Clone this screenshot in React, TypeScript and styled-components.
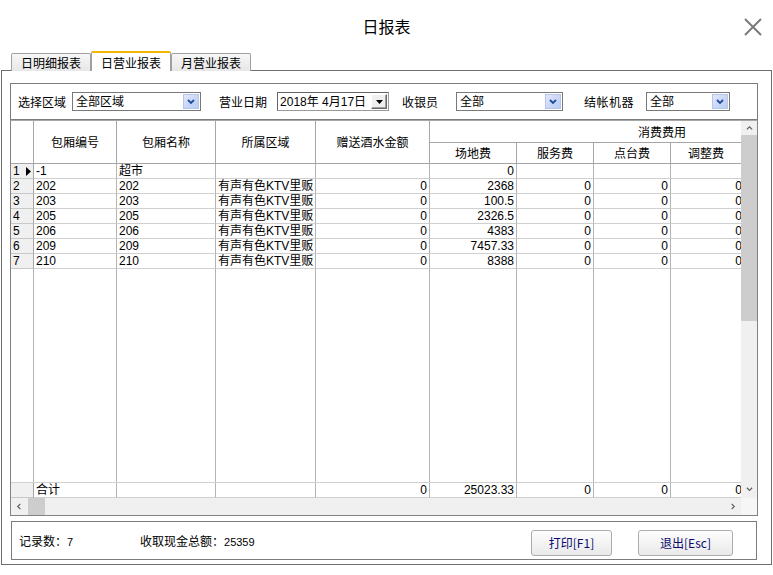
import React from "react";
import styled, { createGlobalStyle } from "styled-components";

const GlobalStyle = createGlobalStyle`
  html, body {
    margin: 0;
    padding: 0;
    background: #fff;
  }
  body {
    font-family: "Noto Sans CJK SC", "Noto Sans", sans-serif;
    font-size: 12px;
    color: #000;
  }
  * {
    box-sizing: border-box;
  }
`;

const COLS = "23px 83px 99px 100px 114px 87px 77px 77px 74px";
const DATA_FONT = `"Liberation Sans", "Noto Sans CJK SC", sans-serif`;

const Window = styled.div`
  width: 773px;
  height: 575px;
  background: #fff;
  display: flex;
  flex-direction: column;
  overflow: hidden;
`;

const TitleBar = styled.div`
  height: 51px;
  display: grid;
  grid-template-columns: 1fr auto 1fr;
  align-items: center;
`;

const Title = styled.h1`
  grid-column: 2;
  margin: 0;
  font-size: 16px;
  font-weight: 400;
  line-height: 20px;
  padding-top: 1px;
`;

const CloseButton = styled.div`
  grid-column: 3;
  justify-self: end;
  width: 20px;
  height: 20px;
  margin-right: 10px;
  margin-top: 3px;
  display: flex;
`;

const TabStrip = styled.div`
  height: 20px;
  display: flex;
  align-items: flex-end;
  padding-left: 11px;
  margin-bottom: -1px;
  position: relative;
  z-index: 1;
`;

const Tab = styled.div<{ $active?: boolean }>`
  width: 80px;
  height: ${({ $active }) => ($active ? "20px" : "18px")};
  display: flex;
  align-items: center;
  justify-content: center;
  font-size: 12px;
  line-height: 14px;
  border: 1px solid #a0a0a0;
  border-bottom: none;
  border-radius: 2px 2px 0 0;
  border-top: ${({ $active }) => ($active ? "2px solid #f2b600" : "1px solid #a0a0a0")};
  background: ${({ $active }) =>
    $active ? "#fff" : "linear-gradient(#f7f7f7, #e7e7e7)"};
  padding-top: ${({ $active }) => ($active ? "1px" : "0")};
`;

const Panel = styled.div`
  margin: 0 1px;
  height: 495px;
  border: 1px solid #6e6e6e;
  padding: 12px 0 0 8px;
  display: flex;
  flex-direction: column;
`;

const FilterBox = styled.div`
  width: 748px;
  height: 37px;
  border: 1px solid #7c7c7c;
  display: flex;
  align-items: center;
  padding-left: 7px;
`;

const Label = styled.span<{ $ml?: number; $mr: number; $spacing?: number }>`
  margin-left: ${({ $ml }) => $ml ?? 0}px;
  margin-right: ${({ $mr }) => $mr}px;
  letter-spacing: ${({ $spacing }) => $spacing ?? 0}px;
  font-size: 12px;
  white-space: nowrap;
`;

const Select = styled.div<{ $w: number }>`
  width: ${({ $w }) => $w}px;
  height: 19px;
  border: 1px solid #787878;
  background: #fff;
  display: flex;
  align-items: center;
  padding: 0 1px 0 3px;
  font-size: 12px;
`;

const SelectValue = styled.span`
  flex: 1;
  line-height: 14px;
  font-family: ${DATA_FONT};
`;

const BlueDrop = styled.div`
  width: 16px;
  height: 15px;
  border: 1px solid #b4c6ec;
  background: linear-gradient(135deg, #e6e8fb 0%, #c9d6f6 55%, #b8d0f2 100%);
  display: flex;
  align-items: center;
  justify-content: center;
`;

const DateBox = styled.div`
  width: 112px;
  height: 19px;
  border: 1px solid;
  border-color: #646464 #9a9a9a #9a9a9a #646464;
  background: #fff;
  display: flex;
  align-items: center;
  padding: 0 1px 0 2px;
  font-size: 12px;
`;

const GrayDrop = styled.div`
  width: 16px;
  height: 15px;
  background: #f0f0f0;
  border: 1px solid;
  border-color: #fff #6a6a6a #6a6a6a #fff;
  box-shadow: inset -1px -1px 0 #a0a0a0;
  display: flex;
  align-items: center;
  justify-content: center;
`;

const GridFrame = styled.div`
  width: 748px;
  height: 396px;
  border: 1px solid #828282;
  border-top-color: #a8a8a8;
  display: grid;
  grid-template-columns: 730px 16px;
  grid-template-rows: 377px 17px;
`;

const Viewport = styled.div`
  overflow: hidden;
  display: flex;
  flex-direction: column;
`;

const HeaderGrid = styled.div`
  display: grid;
  grid-template-columns: ${COLS};
  grid-template-rows: 22px 21px;
  width: 734px;
  flex: none;
`;

const HeadCell = styled.div<{ $col: string; $row: string; $align?: string; $pr?: number; $pl?: number }>`
  grid-column: ${({ $col }) => $col};
  grid-row: ${({ $row }) => $row};
  border-right: 1px solid #a6a6a6;
  border-bottom: 1px solid #a6a6a6;
  background: #fff;
  display: flex;
  align-items: center;
  justify-content: ${({ $align }) => $align ?? "center"};
  padding-right: ${({ $pr }) => $pr ?? 0}px;
  padding-left: ${({ $pl }) => $pl ?? 0}px;
  font-size: 12px;
  line-height: 14px;
  white-space: nowrap;
`;

const Row = styled.div<{ $total?: boolean }>`
  display: grid;
  grid-template-columns: ${COLS};
  height: ${({ $total }) => ($total ? "16px" : "15px")};
  width: 734px;
  flex: none;
  border-top: ${({ $total }) => ($total ? "1px solid #d0d0d0" : "none")};
`;

const Cell = styled.div<{ $right?: boolean }>`
  border-right: 1px solid #b4b4b4;
  border-bottom: 1px solid #d0d0d0;
  padding: 0 2px;
  font-family: ${DATA_FONT};
  font-size: 12px;
  line-height: 14px;
  white-space: nowrap;
  text-align: ${({ $right }) => ($right ? "right" : "left")};
`;

const NumCell = styled.div`
  border-right: 1px solid #a6a6a6;
  border-bottom: 1px solid #c8c8c8;
  background: #f0f0f0;
  padding-left: 2px;
  font-family: ${DATA_FONT};
  font-size: 12px;
  line-height: 14px;
  display: flex;
  align-items: center;
  gap: 6px;
`;

const Filler = styled.div`
  flex: 1;
  display: grid;
  grid-template-columns: ${COLS};
  width: 734px;
`;

const FillerCell = styled.div`
  border-right: 1px solid #b4b4b4;
`;

const VScroll = styled.div`
  grid-row: 1;
  grid-column: 2;
  background: #f0f0f0;
  display: flex;
  flex-direction: column;
`;

const ArrowBox = styled.div<{ $h: number; $w?: number }>`
  height: ${({ $h }) => $h}px;
  width: ${({ $w }) => ($w ? `${$w}px` : "auto")};
  flex: none;
  display: flex;
  align-items: center;
  justify-content: center;
`;

const VThumb = styled.div`
  height: 186px;
  flex: none;
  background: #cdcdcd;
`;

const Spacer = styled.div`
  flex: 1;
`;

const HScroll = styled.div`
  grid-row: 2;
  grid-column: 1;
  background: #f0f0f0;
  display: flex;
`;

const HThumb = styled.div`
  width: 17px;
  flex: none;
  background: #cdcdcd;
`;

const Corner = styled.div`
  grid-row: 2;
  grid-column: 2;
  background: #f6f6f6;
`;

const StatusBox = styled.div`
  width: 746px;
  height: 39px;
  margin: 5px 0 0 1px;
  border: 1px solid #7c7c7c;
  display: flex;
  align-items: center;
  padding-left: 7px;
  padding-right: 23px;
`;

const Stat = styled.span<{ $w: number }>`
  width: ${({ $w }) => $w}px;
  font-size: 12px;
  white-space: nowrap;
`;

const StatValue = styled.span`
  font-family: ${DATA_FONT};
  font-size: 11px;
`;

const ActionButton = styled.button<{ $w: number }>`
  width: ${({ $w }) => $w}px;
  height: 26px;
  margin-left: 26px;
  border: 1px solid #adadad;
  border-radius: 3px;
  background: linear-gradient(#fdfdfd 0%, #f4f4f4 50%, #e9e9e9 100%);
  color: #0b0b6e;
  font-family: "Noto Sans CJK SC", "Noto Sans", sans-serif;
  font-size: 12px;
  padding: 0;
  margin-top: 4px;

  &:first-of-type {
    margin-left: auto;
  }
`;

const Chevron: React.FC<{ dir: "up" | "down" | "left" | "right"; color?: string; size?: number; width?: number }> = ({
  dir,
  color = "#606060",
  size = 7,
  width = 1.4,
}) => {
  const pts = {
    up: "1,5 4,2 7,5",
    down: "1,2 4,5 7,2",
    left: "5,1 2,4 5,7",
    right: "3,1 6,4 3,7",
  }[dir];
  return (
    <svg width={size} height={size} viewBox="0 0 8 8">
      <polyline points={pts} fill="none" stroke={color} strokeWidth={width} />
    </svg>
  );
};

const BlueDropButton = () => (
  <BlueDrop>
    <Chevron dir="down" color="#1d4f9e" size={8} width={1.8} />
  </BlueDrop>
);

type RowData = {
  no: string;
  code: string;
  name: string;
  area: string;
  gift: string;
  venue: string;
  service: string;
  table: string;
  adjust: string;
};

const AREA = "有声有色KTV里贩";

const rows: RowData[] = [
  { no: "1", code: "-1", name: "超市", area: "", gift: "", venue: "0", service: "", table: "", adjust: "" },
  { no: "2", code: "202", name: "202", area: AREA, gift: "0", venue: "2368", service: "0", table: "0", adjust: "0" },
  { no: "3", code: "203", name: "203", area: AREA, gift: "0", venue: "100.5", service: "0", table: "0", adjust: "0" },
  { no: "4", code: "205", name: "205", area: AREA, gift: "0", venue: "2326.5", service: "0", table: "0", adjust: "0" },
  { no: "5", code: "206", name: "206", area: AREA, gift: "0", venue: "4383", service: "0", table: "0", adjust: "0" },
  { no: "6", code: "209", name: "209", area: AREA, gift: "0", venue: "7457.33", service: "0", table: "0", adjust: "0" },
  { no: "7", code: "210", name: "210", area: AREA, gift: "0", venue: "8388", service: "0", table: "0", adjust: "0" },
];

const DataRow: React.FC<{ r: RowData; current?: boolean }> = ({ r, current }) => (
  <Row>
    <NumCell>
      {r.no}
      {current && (
        <svg width="5" height="9" viewBox="0 0 5 9">
          <polygon points="0,0 5,4.5 0,9" fill="#000" />
        </svg>
      )}
    </NumCell>
    <Cell>{r.code}</Cell>
    <Cell>{r.name}</Cell>
    <Cell>{r.area}</Cell>
    <Cell $right>{r.gift}</Cell>
    <Cell $right>{r.venue}</Cell>
    <Cell $right>{r.service}</Cell>
    <Cell $right>{r.table}</Cell>
    <Cell $right>{r.adjust}</Cell>
  </Row>
);

export default function App() {
  return (
    <Window>
      <GlobalStyle />
      <TitleBar>
        <Title>日报表</Title>
        <CloseButton>
          <svg width="20" height="20" viewBox="0 0 20 20">
            <path d="M2 2 L18 18 M18 2 L2 18" stroke="#7b7b7b" strokeWidth="2" fill="none" />
          </svg>
        </CloseButton>
      </TitleBar>

      <TabStrip>
        <Tab>日明细报表</Tab>
        <Tab $active>日营业报表</Tab>
        <Tab>月营业报表</Tab>
      </TabStrip>

      <Panel>
        <FilterBox>
          <Label $mr={6}>选择区域</Label>
          <Select $w={129}>
            <SelectValue>全部区域</SelectValue>
            <BlueDropButton />
          </Select>
          <Label $ml={18} $mr={10}>营业日期</Label>
          <DateBox>
            <SelectValue>2018年 4月17日</SelectValue>
            <GrayDrop>
              <svg width="7" height="4" viewBox="0 0 7 4">
                <polygon points="0,0 7,0 3.5,4" fill="#000" />
              </svg>
            </GrayDrop>
          </DateBox>
          <Label $ml={13} $mr={18}>收银员</Label>
          <Select $w={107}>
            <SelectValue>全部</SelectValue>
            <BlueDropButton />
          </Select>
          <Label $ml={21} $mr={12} $spacing={0.5}>结帐机器</Label>
          <Select $w={84}>
            <SelectValue>全部</SelectValue>
            <BlueDropButton />
          </Select>
        </FilterBox>

        <GridFrame>
          <Viewport>
            <HeaderGrid>
              <HeadCell $col="1" $row="1 / 3" />
              <HeadCell $col="2" $row="1 / 3">包厢编号</HeadCell>
              <HeadCell $col="3" $row="1 / 3">包厢名称</HeadCell>
              <HeadCell $col="4" $row="1 / 3">所属区域</HeadCell>
              <HeadCell $col="5" $row="1 / 3">赠送酒水金额</HeadCell>
              <HeadCell $col="6 / 10" $row="1" $align="flex-end" $pr={58}>
                消费费用
              </HeadCell>
              <HeadCell $col="6" $row="2">场地费</HeadCell>
              <HeadCell $col="7" $row="2">服务费</HeadCell>
              <HeadCell $col="8" $row="2">点台费</HeadCell>
              <HeadCell $col="9" $row="2" $align="flex-start" $pl={17}>
                调整费
              </HeadCell>
            </HeaderGrid>

            {rows.map((r, i) => (
              <DataRow key={r.no} r={r} current={i === 0} />
            ))}

            <Filler>
              {Array.from({ length: 9 }).map((_, i) => (
                <FillerCell key={i} />
              ))}
            </Filler>

            <Row $total>
              <NumCell />
              <Cell>合计</Cell>
              <Cell />
              <Cell />
              <Cell $right>0</Cell>
              <Cell $right>25023.33</Cell>
              <Cell $right>0</Cell>
              <Cell $right>0</Cell>
              <Cell $right>0</Cell>
            </Row>
          </Viewport>

          <VScroll>
            <ArrowBox $h={14}>
              <Chevron dir="up" />
            </ArrowBox>
            <VThumb />
            <Spacer />
            <ArrowBox $h={17}>
              <Chevron dir="down" />
            </ArrowBox>
          </VScroll>

          <HScroll>
            <ArrowBox $h={17} $w={17}>
              <Chevron dir="left" />
            </ArrowBox>
            <HThumb />
            <Spacer />
            <ArrowBox $h={17} $w={17}>
              <Chevron dir="right" />
            </ArrowBox>
          </HScroll>
          <Corner />
        </GridFrame>

        <StatusBox>
          <Stat $w={121}>
            记录数：<StatValue>7</StatValue>
          </Stat>
          <Stat $w={200}>
            收取现金总额：<StatValue>25359</StatValue>
          </Stat>
          <ActionButton $w={81}>打印[F1]</ActionButton>
          <ActionButton $w={95}>退出[Esc]</ActionButton>
        </StatusBox>
      </Panel>
    </Window>
  );
}
